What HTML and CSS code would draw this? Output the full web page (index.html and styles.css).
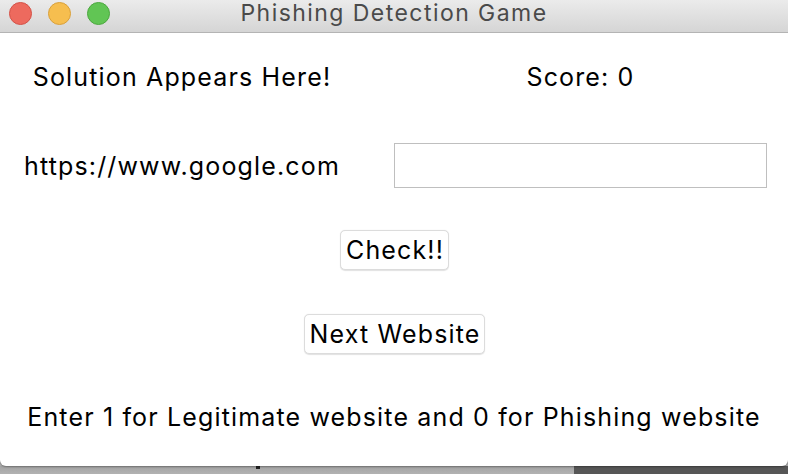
FILE: index.html
```html
<!DOCTYPE html>
<html>
<head>
<meta charset="utf-8">
<link rel="stylesheet" href="styles.css">
</head>
<body>
<div class="desktop">
  <div class="window">
    <div class="titlebar">
      <div class="lights">
        <span class="light red"></span>
        <span class="light yellow"></span>
        <span class="light green"></span>
      </div>
      <div class="title">Phishing Detection Game</div>
    </div>
    <div class="content">
      <div class="cell left">Solution Appears Here!</div>
      <div class="cell right">Score: 0</div>
      <div class="cell left">https://www.google.com</div>
      <div class="cell right"><input class="entry" type="text"></div>
      <div class="cell full"><button class="btn btn-check">Check!!</button></div>
      <div class="cell full"><button class="btn btn-next">Next Website</button></div>
      <div class="cell full">Enter 1 for Legitimate website and 0 for Phishing website</div>
    </div>
  </div>
  <div class="backdrop">
    <div class="bg-light"><span class="mark"></span></div>
    <div class="bg-dark"></div>
  </div>
</div>
</body>
</html>
```

FILE: styles.css
```css
html, body {
  margin: 0;
  padding: 0;
  background: #b0b0b0;
}
.desktop {
  width: 788px;
  height: 474px;
  display: flex;
  flex-direction: column;
  overflow: hidden;
}
.window {
  height: 466px;
  background: #ffffff;
  border-radius: 0 0 6px 6px;
  display: flex;
  flex-direction: column;
  position: relative;
  z-index: 1;
  box-shadow: 0 1px 2px rgba(0,0,0,0.35);
}
.titlebar {
  height: 32px;
  border-bottom: 1px solid #b4b4b4;
  background: linear-gradient(#ebebeb, #d5d5d5);
  display: flex;
  align-items: center;
  position: relative;
}
.lights {
  display: flex;
  gap: 16px;
  padding-left: 9px;
  padding-bottom: 5px;
}
.light {
  width: 23px;
  height: 23px;
  border-radius: 50%;
  box-sizing: border-box;
}
.red { background: #ed6a5e; border: 1px solid #d45248; }
.yellow { background: #f6be4f; border: 1px solid #d9a03b; }
.green { background: #61c554; border: 1px solid #4ca83f; }
.title {
  position: absolute;
  left: 0;
  right: 0;
  top: 0;
  text-align: center;
  font-family: Inter, "Liberation Sans", Arial, sans-serif;
  font-size: 23px;
  letter-spacing: 1.45px;
  line-height: 27px;
  color: #4a4a4a;
}
.content {
  flex: 1;
  display: grid;
  grid-template-columns: 364px 1fr;
  grid-template-rows: 88px 89px 80px 87px 79px;
  font-family: Inter, "Liberation Sans", Arial, sans-serif;
  font-size: 25px;
  letter-spacing: 1.15px;
  color: #000;
}
.cell {
  display: flex;
  align-items: center;
  justify-content: center;
}
.right {
  padding-left: 9px;
}
.full {
  grid-column: 1 / 3;
}
.entry {
  width: 373px;
  height: 45px;
  box-sizing: border-box;
  border: 1px solid #bfbfbf;
  background: #fff;
  margin: 0;
  outline: none;
}
.btn {
  font-family: Inter, "Liberation Sans", Arial, sans-serif;
  font-size: 25px;
  letter-spacing: 1.15px;
  color: #000;
  background: #fff;
  border: 1px solid #dcdcdc;
  border-radius: 5px;
  height: 40px;
  padding: 0 0 0 2px;
  margin: 0;
  box-shadow: 0 0.5px 1px rgba(0,0,0,0.12);
  white-space: nowrap;
}
.btn-check { width: 109px; }
.btn-next { width: 181px; }
.backdrop {
  flex: 1;
  display: flex;
}
.bg-light {
  width: 574px;
  background: linear-gradient(#a4a4a4, #b2b2b2);
  position: relative;
}
.bg-dark {
  flex: 1;
  background: #565656;
}
.mark {
  position: absolute;
  left: 256px;
  top: 0;
  width: 4px;
  height: 3px;
  background: #222;
}
```
